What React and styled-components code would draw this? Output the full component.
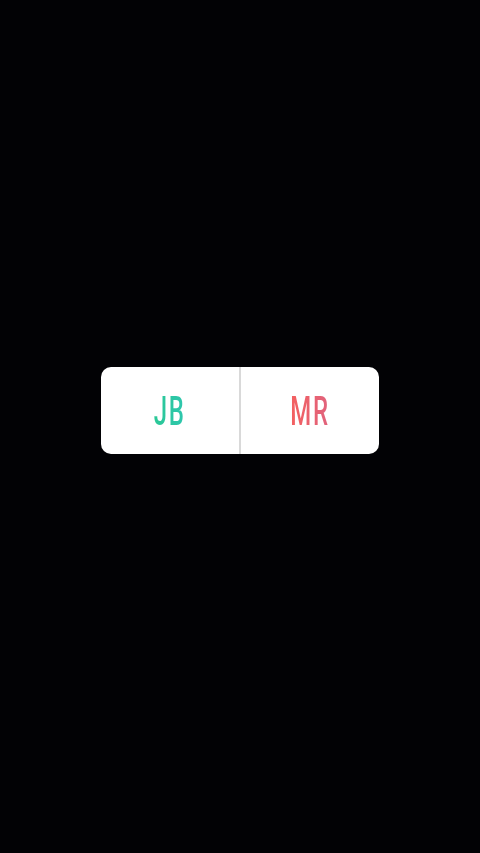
import styled, { createGlobalStyle } from "styled-components";

const GlobalStyle = createGlobalStyle`
  html, body {
    margin: 0;
    padding: 0;
    background: #020205;
  }
`;

const Screen = styled.div`
  display: flex;
  align-items: center;
  justify-content: center;
  min-height: 853px;
  box-sizing: border-box;
  padding-bottom: 32px;
  background: #020205;
`;

const Poll = styled.div`
  display: flex;
  width: 278px;
  height: 87px;
  background: #ffffff;
  border-radius: 10px;
  overflow: hidden;
`;

const Option = styled.div`
  flex: 1;
  display: flex;
  align-items: center;
  justify-content: center;
  padding-top: 3px;
  & + & {
    border-left: 2px solid #d9d9d9;
  }
`;

const Label = styled.span`
  display: inline-block;
  font-family: Roboto, "Liberation Sans", sans-serif;
  font-weight: 500;
  font-size: 40px;
  line-height: 1;
  letter-spacing: 3px;
  transform: scaleX(0.6);
  background: ${(p) => p.$gradient};
  -webkit-background-clip: text;
  background-clip: text;
  color: transparent;
`;

export default function App() {
  return (
    <>
      <GlobalStyle />
      <Screen>
        <Poll>
          <Option>
            <Label $gradient="linear-gradient(90deg, #2bc896, #2ec6ae)">JB</Label>
          </Option>
          <Option>
            <Label $gradient="linear-gradient(90deg, #f4605f, #e0637e)">MR</Label>
          </Option>
        </Poll>
      </Screen>
    </>
  );
}
